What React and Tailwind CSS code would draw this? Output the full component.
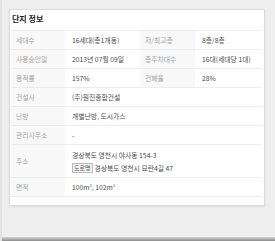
export default function App() {
  const font = { fontFamily: '"Noto Sans CJK KR", "Noto Sans", sans-serif' };
  const Row = ({ children, h = "h-[19px]" }) => (
    <div className={`flex ${h} border-b border-[#ececec] items-center`}>{children}</div>
  );
  const L = ({ children, w }) => (
    <div className={`${w} h-full bg-[#f8f8f8] flex items-center pl-[5px] text-[#a3a3a3]`}>{children}</div>
  );
  const V = ({ children, w }) => (
    <div className={`${w} h-full flex items-center pl-[7px] text-[#4a4a4a]`}>{children}</div>
  );
  return (
    <div
      className="w-[275px] h-[241px] bg-[#efefef] relative overflow-hidden border-l-2 border-[#e3e3e3]"
      style={font}
    >
      <div className="absolute left-0 right-0 bottom-0 h-[4px] bg-gradient-to-b from-[#d8d8d8] to-[#8c8c8c]" />
      <div className="ml-[7px] mt-[9px] w-[256px] h-[197px] bg-white border border-[#dcdcdc] shadow-[0_1px_2px_rgba(0,0,0,0.08)]">
        <div className="h-[20px] pl-[2px] pt-[3px] text-[8px] font-bold text-[#222] leading-[12px]">단지 정보</div>
        <div className="ml-[1px] w-[250px] border-t border-[#ececec] text-[6.8px] leading-[10px]">
          <Row>
            <L w="w-[54px]">세대수</L>
            <V w="w-[75px]">16세대(총1개동)</V>
            <L w="w-[55px]">저/최고층</L>
            <V w="w-[66px]">8층/8층</V>
          </Row>
          <Row>
            <L w="w-[54px]">사용승인일</L>
            <V w="w-[75px]">2013년 07월 09일</V>
            <L w="w-[55px]">총주차대수</L>
            <V w="w-[66px]">16대(세대당 1대)</V>
          </Row>
          <Row>
            <L w="w-[54px]">용적률</L>
            <V w="w-[75px]">157%</V>
            <L w="w-[55px]">건폐율</L>
            <V w="w-[66px]">28%</V>
          </Row>
          <Row>
            <L w="w-[54px]">건설사</L>
            <V w="w-[196px]">(주)원진종합건설</V>
          </Row>
          <Row>
            <L w="w-[54px]">난방</L>
            <V w="w-[196px]">개별난방, 도시가스</V>
          </Row>
          <Row>
            <L w="w-[54px]">관리사무소</L>
            <V w="w-[196px]">-</V>
          </Row>
          <Row h="h-[33px]">
            <L w="w-[54px]">주소</L>
            <div className="w-[196px] h-full flex flex-col justify-center pl-[7px] text-[#4a4a4a] gap-[3px]">
              <div>경상북도 영천시 야사동 154-3</div>
              <div className="flex items-center gap-[2px]">
                <span className="border border-[#bbb] bg-[#f5f5f5] text-[6px] leading-[8px] px-[1px] text-[#555]">도로명</span>
                <span>경상북도 영천시 묘란4길 47</span>
              </div>
            </div>
          </Row>
          <Row>
            <L w="w-[54px]">면적</L>
            <V w="w-[196px]">
              100m<sup className="text-[4px]">2</sup>, 102m<sup className="text-[4px]">2</sup>
            </V>
          </Row>
        </div>
      </div>
    </div>
  );
}
